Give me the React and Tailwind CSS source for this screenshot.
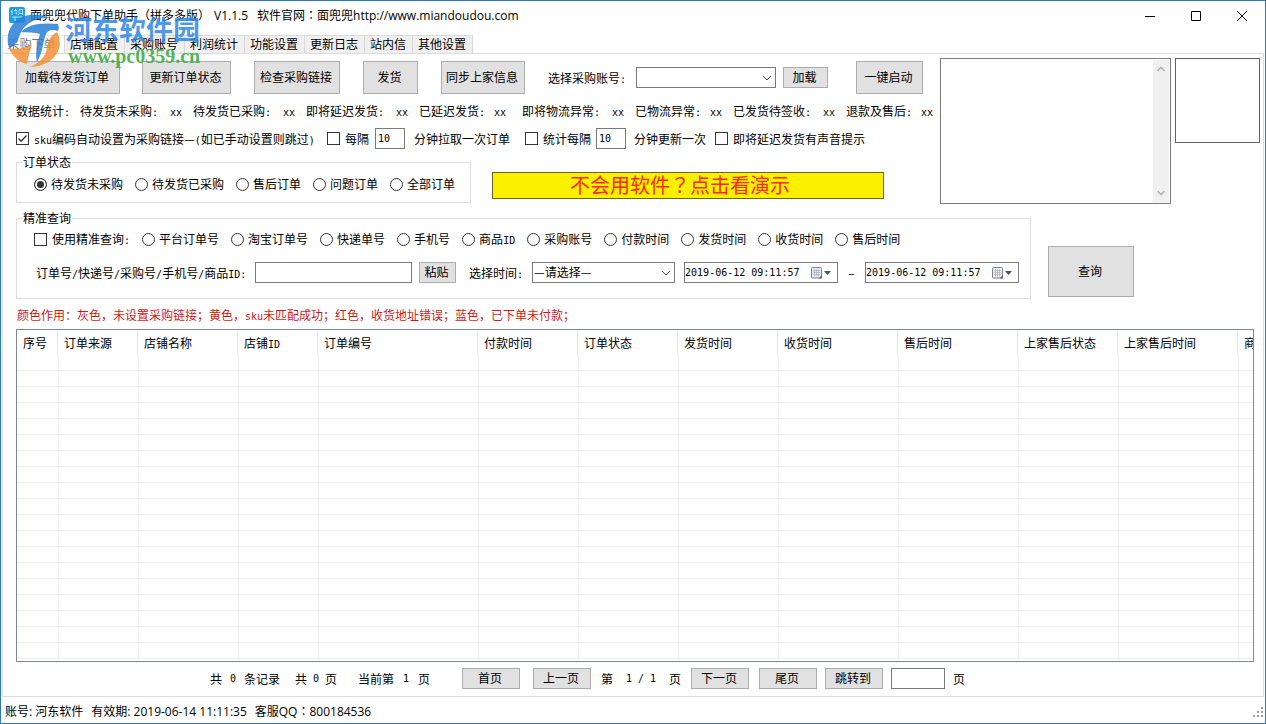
import React, { useState } from "react";

const BTN =
  "flex shrink-0 items-center justify-center whitespace-nowrap border border-[#adadad] bg-[#e1e1e1] pr-[2px] pb-[2px] leading-none";
const FIELD = "shrink-0 border border-[#7a7a7a] bg-white outline-none";

/* Chinese text with half-width Latin runs set in a 6px-wide monospace. */
function T({ children }) {
  return children.split(/([\x20-\x7e]+)/).map((part, i) =>
    /^[\x20-\x7e]+$/.test(part) ? (
      <span
        key={i}
        className="whitespace-pre font-['DejaVu_Sans_Mono','Liberation_Mono',monospace] text-[10px] leading-none"
      >
        {part}
      </span>
    ) : (
      part
    )
  );
}

/* Full-width punctuation centred in its square. */
function P({ children }) {
  return <span className="font-['Noto_Sans_CJK_TC',sans-serif] leading-none">{children}</span>;
}

function Check({ label, checked = false }) {
  const [on, setOn] = useState(checked);
  return (
    <label className="flex shrink-0 items-center gap-[5px] whitespace-nowrap">
      <span className="relative size-[13px]">
        <input
          type="checkbox"
          checked={on}
          onChange={() => setOn(!on)}
          className="peer block size-[13px] appearance-none border border-[#333] bg-white"
        />
        <svg
          viewBox="0 0 13 13"
          className="pointer-events-none absolute inset-0 hidden size-[13px] peer-checked:block"
          fill="none"
          stroke="#333"
          strokeWidth="1.3"
        >
          <path d="M2.5 6.5 5 9.3 10.5 3.5" />
        </svg>
      </span>
      <span>
        <T>{label}</T>
      </span>
    </label>
  );
}

function Radio({ label, name, checked = false }) {
  return (
    <label className="flex shrink-0 items-center gap-1 whitespace-nowrap">
      <input
        type="radio"
        name={name}
        defaultChecked={checked}
        className="block size-[13px] appearance-none rounded-full border border-[#333] bg-white checked:bg-[#333] checked:shadow-[inset_0_0_0_2px_white]"
      />
      <span>
        <T>{label}</T>
      </span>
    </label>
  );
}

function Select({ label, width, children }) {
  return (
    <span className={"relative shrink-0 " + width}>
      <select
        aria-label={label}
        className="block h-[21px] w-full appearance-none border border-[#7a7a7a] bg-white pb-[2px] pl-px text-[12px] leading-none outline-none"
      >
        {children}
      </select>
      <svg
        viewBox="0 0 10 6"
        className="pointer-events-none absolute top-[8px] right-[4px] h-[6px] w-[10px]"
        fill="none"
        stroke="#444"
      >
        <path d="M1 1l4 4 4-4" />
      </svg>
    </span>
  );
}

function DateBox({ label }) {
  return (
    <span className="flex h-[21px] w-[154px] shrink-0 items-center border border-[#7a7a7a] bg-white">
      <input
        aria-label={label}
        defaultValue="2019-06-12 09:11:57"
        className="w-0 flex-1 bg-transparent font-['DejaVu_Sans_Mono','Liberation_Mono',monospace] text-[10px] outline-none"
      />
      <button aria-label="打开日历" className="mr-[5px]">
        <svg viewBox="0 0 22 13" className="block h-[13px] w-[22px]">
          <rect x="1.5" y="1.5" width="10" height="10.5" rx="1" fill="#eceef0" stroke="#7d8085" />
          <path d="M3 4.5h7M3 6.5h7M3 8.5h7M4.5 3v7.500M6.500 3v7.500M8.500 3v7.500" stroke="#a6b1bf" strokeWidth=".7" />
          <path d="M8.500 12.500 12 9v3.500z" fill="#60666e" />
          <path d="M14 5h7l-3.500 4z" fill="#44546a" />
        </svg>
      </button>
    </span>
  );
}

const tabs = ["店铺配置", "采购账号", "利润统计", "功能设置", "更新日志", "站内信", "其他设置"];

const stats = [
  ["待发货未采购:", "待发货已采购:", "即将延迟发货:", "已延迟发货:"],
  ["即将物流异常:", "已物流异常:", "已发货待签收:", "退款及售后:"],
];

const columns = [
  ["序号", "w-[41px]"],
  ["订单来源", "w-[80px]"],
  ["店铺名称", "w-[100px]"],
  ["店铺ID", "w-[80px]"],
  ["订单编号", "w-[160px]"],
  ["付款时间", "w-[100px]"],
  ["订单状态", "w-[100px]"],
  ["发货时间", "w-[100px]"],
  ["收货时间", "w-[120px]"],
  ["售后时间", "w-[120px]"],
  ["上家售后状态", "w-[100px]"],
  ["上家售后时间", "w-[120px]"],
  ["商", ""],
];

function TitleBar() {
  return (
    <header className="flex h-[34px] shrink-0 items-start pl-2">
      <svg viewBox="0 0 16 16" className="mt-[6px] size-4 shrink-0">
        <rect width="16" height="16" rx="2" fill="#1b9fe2" />
        <path
          d="M3.500 2.500 2 5M3 4v4M5 3.500h3M6.500 2l1 5.500M10 2.500v4h3.500v-4zM10 6.500 9 8M13 6.500l1 1.500M3 10h10M6 10v4"
          stroke="#d9f1ff"
          strokeWidth=".8"
          fill="none"
        />
      </svg>
      <h1 className="ml-[5px] flex h-[30px] items-center whitespace-nowrap font-['Open_Sans','Noto_Sans_CJK_SC',sans-serif] text-[12px]">
        <span className="w-[184px]">面兜兜代购下单助手（拼多多版）</span>
        <span className="w-[43px]">V1.1.5</span>
        <span>
          软件官网<P>：</P>面兜兜http://www.miandoudou.com
        </span>
      </h1>
      <div className="ml-auto flex h-[30px] items-center gap-9 pr-[18px]">
        <button aria-label="最小化">
          <svg viewBox="0 0 10 10" className="block size-[10px]" stroke="#000">
            <path d="M0 5.500h10" />
          </svg>
        </button>
        <button aria-label="最大化">
          <svg viewBox="0 0 10 10" className="block size-[10px]" fill="none" stroke="#000">
            <path d="M.5.5h9v9h-9z" />
          </svg>
        </button>
        <button aria-label="关闭">
          <svg viewBox="0 0 10 10" className="block size-[10px]" stroke="#000">
            <path d="M0 0l10 10M10 0 0 10" />
          </svg>
        </button>
      </div>
    </header>
  );
}

function Watermark() {
  return (
    <svg viewBox="0 0 210 80" className="pointer-events-none absolute top-0 left-0 h-[80px] w-[210px]">
      <rect x="4" y="34" width="59" height="18" fill="#fff" opacity=".45" />
      <g opacity=".85">
        <path
          d="M8 47C3 31 12 17 28 14c8-1 15 0 21 3-15-1-27 6-31 19-1 4-4 8-10 11z"
          fill="#2a80d8"
        />
        <path
          d="M20 31c6-7 18-10 37-8 1 3 1 5 0 7-6-2-10-1-12 3-3 8-3 18-9 28-2-8 0-18 3-28-5-2-12-1-19-2z"
          fill="#2a80d8"
        />
        <path d="M8 47c9 2 16 0 23-4-2 7-4 13-5 20C17 61 11 55 8 47z" fill="#f39138" />
        <path d="M56 31c9 17-4 34-27 35 9-4 15-9 17-19 1-8 4-13 10-16z" fill="#f39138" />
      </g>
      <text
        x="64"
        y="39"
        fontSize="27"
        fontWeight="700"
        fill="#2b86e8"
        fillOpacity=".85"
        className="font-['Noto_Sans_CJK_SC',sans-serif]"
      >
        河东软件园
      </text>
      <text
        x="67"
        y="62"
        fontSize="20"
        fontWeight="700"
        fill="#3cab45"
        fillOpacity=".9"
        className="font-['Liberation_Serif',serif]"
      >
        www.pc0359.cn
      </text>
    </svg>
  );
}

export default function App() {
  return (
    <div className="relative flex min-h-screen flex-col overflow-hidden border border-[#2f7ab5] bg-white font-['Noto_Sans_CJK_SC',sans-serif] text-[12px] leading-[14px] text-black">
      <TitleBar />

      <nav className="flex h-[18px] shrink-0 items-stretch pl-px">
        <button className="h-[19px] w-[63px] shrink-0 border-x border-t border-[#d9d9d9] bg-white pr-1 pb-[2px]">
          采购下单
        </button>
        {tabs.map((t) => (
          <button
            key={t}
            className="flex shrink-0 items-center border-t border-r border-[#d9d9d9] bg-[#f0f0f0] pr-[6px] pb-px pl-[5px]"
          >
            {t}
          </button>
        ))}
      </nav>

      <main className="mx-px flex flex-1 flex-col border border-[#dcdcdc] pr-[3px] pl-[13px]">
        <div className="flex items-start pt-[4px]">
          <div className="w-[924px] shrink-0 pt-[3px]">
            <div className="flex items-center">
              <button className={BTN + " h-[33px] w-[104px]"}>加载待发货订单</button>
              <button className={BTN + " ml-[22px] h-[33px] w-[89px]"}>更新订单状态</button>
              <button className={BTN + " ml-[23px] h-[33px] w-[86px]"}>检查采购链接</button>
              <button className={BTN + " ml-[23px] h-[33px] w-[55px]"}>发货</button>
              <button className={BTN + " ml-[23px] h-[33px] w-[84px]"}>同步上家信息</button>
              <span className="mr-[10px] ml-[23px] shrink-0">
                <T>选择采购账号:</T>
              </span>
              <Select label="选择采购账号" width="w-[140px]">
                <option></option>
              </Select>
              <button className={BTN + " ml-[7px] h-[21px] w-[45px]"}>加载</button>
              <button className={BTN + " ml-7 h-[33px] w-[67px]"}>一键启动</button>
            </div>

            <div className="mt-2 flex h-[18px] items-center whitespace-nowrap">
              <span className="w-[64px] shrink-0">
                <T>数据统计:</T>
              </span>
              <div className="flex gap-4">
                {stats.map((group, g) => (
                  <div key={g} className="flex gap-[11px]">
                    {group.map((s) => (
                      <span
                        key={s}
                        className={"flex justify-between " + (s.length > 6 ? "w-[102px]" : "w-[87px]")}
                      >
                        <span>
                          <T>{s}</T>
                        </span>
                        <span>
                          <T>xx</T>
                        </span>
                      </span>
                    ))}
                  </div>
                ))}
              </div>
            </div>

            <div className="mt-2 flex h-[21px] items-center whitespace-nowrap">
              <Check label="sku编码自动设置为采购链接—(如已手动设置则跳过)" checked />
              <div className="ml-3 flex items-center gap-[6px]">
                <Check label="每隔" />
                <input
                  aria-label="拉取间隔分钟"
                  defaultValue="10"
                  className={FIELD + " h-[21px] w-[30px] pl-[2px] font-['DejaVu_Sans_Mono',monospace] text-[10px]"}
                />
                <span className="ml-[3px]">分钟拉取一次订单</span>
              </div>
              <div className="ml-[15px] flex items-center gap-[5px]">
                <Check label="统计每隔" />
                <input
                  aria-label="更新间隔分钟"
                  defaultValue="10"
                  className={FIELD + " h-[21px] w-[30px] pl-[2px] font-['DejaVu_Sans_Mono',monospace] text-[10px]"}
                />
                <span className="ml-[3px]">分钟更新一次</span>
              </div>
              <div className="ml-[9px]">
                <Check label="即将延迟发货有声音提示" />
              </div>
            </div>

            <div className="mt-[6px] flex items-start">
              <fieldset className="h-[48px] w-[455px] shrink-0 border border-[#dcdcdc] pl-[17px]">
                <legend className="-ml-3 px-px">订单状态</legend>
                <div className="flex items-center gap-3 pt-2">
                  {["待发货未采购", "待发货已采购", "售后订单", "问题订单", "全部订单"].map((r, i) => (
                    <Radio key={r} name="status" label={r} checked={i === 0} />
                  ))}
                </div>
              </fieldset>
              <button className="mt-[17px] ml-[21px] flex h-[27px] w-[392px] items-center justify-center border border-[#6b6420] bg-[#fbf000] pr-4 pb-[2px] text-[20px] leading-none text-[#ff2a00]">
                <span>
                  不会用软件<P>？</P>点击看演示
                </span>
              </button>
            </div>
          </div>

          <div className="relative h-[146px] flex-1">
            <textarea
              aria-label="日志"
              className="block size-full resize-none border border-[#7a7a7a] bg-white outline-none"
            />
            <div className="absolute inset-y-[2px] right-[2px] flex w-4 flex-col items-center justify-between bg-[#f0f0f0] py-[6px]">
              <svg viewBox="0 0 8 6" className="h-[6px] w-2" fill="none" stroke="#b5b5b5" strokeWidth="1.600">
                <path d="M.5 5 4 1.500 7.500 5" />
              </svg>
              <svg viewBox="0 0 8 6" className="h-[6px] w-2" fill="none" stroke="#b5b5b5" strokeWidth="1.600">
                <path d="M.5 1 4 4.500 7.500 1" />
              </svg>
            </div>
          </div>
          <div className="ml-1 h-[85px] w-[85px] shrink-0 border border-[#646464]" />
        </div>

        <div className="mt-[7px] flex items-start">
          <fieldset className="h-[88px] w-[1015px] shrink-0 border border-[#dcdcdc] pl-[17px]">
            <legend className="-ml-3 px-px">精准查询</legend>
            <div className="flex items-center gap-3 pt-[7px]">
              <Check label="使用精准查询:" />
              {[
                "平台订单号",
                "淘宝订单号",
                "快递单号",
                "手机号",
                "商品ID",
                "采购账号",
                "付款时间",
                "发货时间",
                "收货时间",
                "售后时间",
              ].map((r) => (
                <Radio key={r} name="query" label={r} />
              ))}
            </div>
            <div className="mt-[16px] flex items-center whitespace-nowrap">
              <label htmlFor="keyword" className="ml-[2px] w-[219px] shrink-0">
                <T>订单号/快递号/采购号/手机号/商品ID:</T>
              </label>
              <input id="keyword" className={FIELD + " h-[21px] w-[157px]"} />
              <button className={BTN + " ml-[7px] h-[21px] w-[37px]"}>粘贴</button>
              <span className="mr-[9px] ml-[13px]">
                <T>选择时间:</T>
              </span>
              <Select label="选择时间" width="w-[143px]">
                <option>—请选择—</option>
              </Select>
              <span className="w-[9px] shrink-0" />
              <DateBox label="开始时间" />
              <span className="w-[27px] shrink-0 text-center">–</span>
              <DateBox label="结束时间" />
            </div>
          </fieldset>
          <button className={BTN + " mt-[35px] ml-[17px] h-[51px] w-[86px]"}>查询</button>
        </div>

        <p className="mt-2 h-4 whitespace-nowrap pl-px leading-4 text-[#d01818]">
          <T>颜色作用：灰色，未设置采购链接；黄色，sku未匹配成功；红色，收货地址错误；蓝色，已下单未付款；</T>
        </p>

        <div className="mt-[6px] mr-[6px] flex-1 overflow-hidden border border-[#828790]">
          <table className="w-full table-fixed border-separate border-spacing-0">
            <thead>
              <tr className="h-[25px]">
                {columns.map(([c, w]) => (
                  <th
                    key={c}
                    className={
                      "overflow-hidden border-r border-[#e5e5e5] p-0 pl-[6px] text-left font-normal whitespace-nowrap last:border-r-0 " +
                      w
                    }
                  >
                    <T>{c}</T>
                  </th>
                ))}
              </tr>
            </thead>
            <tbody>
              {Array.from({ length: 19 }, (_, r) => (
                <tr key={r} className="h-4">
                  {columns.map(([c]) => (
                    <td key={c} className="border-b border-l border-[#ededed] p-0 first:border-l-0" />
                  ))}
                </tr>
              ))}
            </tbody>
          </table>
        </div>

        <div className="flex h-[34px] shrink-0 items-center whitespace-nowrap pb-px pl-[194px]">
          <span className="flex w-[85px] shrink-0 items-center gap-2">
            <span>共</span>
            <T>0</T>
            <span>条记录</span>
          </span>
          <span className="flex w-[63px] shrink-0 items-center gap-[6px]">
            <span>共</span>
            <T>0</T>
            <span>页</span>
          </span>
          <span className="flex w-[104px] shrink-0 items-center gap-[9px]">
            <span>当前第</span>
            <T>1</T>
            <span>页</span>
          </span>
          <button className={BTN + " h-[21px] w-[58px]"}>首页</button>
          <button className={BTN + " ml-[13px] h-[21px] w-[58px]"}>上一页</button>
          <span className="mx-[10px] flex w-[80px] shrink-0 items-center justify-between">
            <span>第</span>
            <T>1 / 1</T>
            <span>页</span>
          </span>
          <button className={BTN + " h-[21px] w-[58px]"}>下一页</button>
          <button className={BTN + " ml-[10px] h-[21px] w-[58px]"}>尾页</button>
          <button className={BTN + " ml-2 h-[21px] w-[58px]"}>跳转到</button>
          <input aria-label="页码" className={FIELD + " ml-2 h-[21px] w-[54px]"} />
          <span className="ml-2">页</span>
        </div>
      </main>

      <footer className="flex h-[26px] shrink-0 items-center gap-2 pt-[3px] pr-[2px] pl-1 font-['Open_Sans','Noto_Sans_CJK_SC',sans-serif] whitespace-nowrap">
        <span>账号: 河东软件</span>
        <span>有效期: 2019-06-14 11:11:35</span>
        <span>
          客服QQ<P>：</P>800184536
        </span>
        <svg viewBox="0 0 10 10" className="ml-auto size-[10px]" fill="#9a9a9a">
          <path d="M8 0h2v2H8zM8 4h2v2H8zM4 4h2v2H4zM8 8h2v2H8zM4 8h2v2H4zM0 8h2v2H0z" />
        </svg>
      </footer>

      <Watermark />
    </div>
  );
}
